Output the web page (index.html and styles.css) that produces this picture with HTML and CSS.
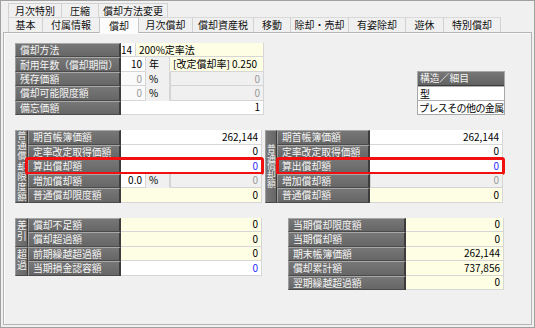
FILE: index.html
```html
<!DOCTYPE html>
<html lang="ja">
<head>
<meta charset="utf-8">
<link rel="stylesheet" href="styles.css">
</head>
<body>
<div class="win">
  <div class="tabs">
    <div class="tabrow r1">
      <span class="tab w54">月次特別</span>
      <span class="tab w38">圧縮</span>
      <span class="tab w70">償却方法変更</span>
    </div>
    <div class="tabrow r2">
      <span class="tab w35">基本</span>
      <span class="tab w58">付属情報</span>
      <span class="tab w40 sel">償却</span>
      <span class="tab w55">月次償却</span>
      <span class="tab w62">償却資産税</span>
      <span class="tab w38">移動</span>
      <span class="tab w59">除却・売却</span>
      <span class="tab w58">有姿除却</span>
      <span class="tab w39">遊休</span>
      <span class="tab w58">特別償却</span>
    </div>
  </div>
  <div class="panel">
    <div class="top">
      <div class="t1">
        <div class="row"><div class="lab">償却方法</div><div class="c wh w15 num">14</div><div class="c yl w127 txt">200%定率法</div></div>
        <div class="row"><div class="lab">耐用年数（償却期間）</div><div class="c wh w25 num">10</div><div class="c pl w24 txt">年</div><div class="c yl w93 txt">[改定償却率]&nbsp;0.250</div></div>
        <div class="row"><div class="lab">残存価額</div><div class="c lt w25 num gr">0</div><div class="c pl w24 txt">%</div><div class="c dis w93 num gr">0</div></div>
        <div class="row"><div class="lab">償却可能限度額</div><div class="c lt w25 num gr">0</div><div class="c pl w24 txt">%</div><div class="c dis w93 num gr">0</div></div>
        <div class="row"><div class="lab">備忘価額</div><div class="c wh w142 num">1</div></div>
      </div>
      <div class="struct">
        <div class="shead">構造／細目</div>
        <div class="sval">型</div>
        <div class="sval tight">プレスその他の金属</div>
      </div>
    </div>

    <div class="sec2">
      <div class="grp gl">
        <div class="vert v7"><span>普通償却限度額</span></div>
        <div class="rows">
          <div class="row"><div class="lab l92">期首帳簿価額</div><div class="c wh w141 num">262,144</div></div>
          <div class="row"><div class="lab l92">定率改定取得価額</div><div class="c wh w141 num">0</div></div>
          <div class="row hl hl-l"><div class="lab l92">算出償却額</div><div class="c wh w141 num bl">0</div></div>
          <div class="row"><div class="lab l92">増加償却額</div><div class="c wh w25 num">0.0</div><div class="c pl w24 txt">%</div><div class="c dis w92 num gr">0</div></div>
          <div class="row"><div class="lab l92">普通償却限度額</div><div class="c yl w141 num">0</div></div>
        </div>
      </div>
      <div class="grp gr2">
        <div class="vert v5"><span>普通償却額</span></div>
        <div class="rows">
          <div class="row"><div class="lab l93">期首帳簿価額</div><div class="c wh w133 num">262,144</div></div>
          <div class="row"><div class="lab l93">定率改定取得価額</div><div class="c wh w133 num">0</div></div>
          <div class="row hl hl-r"><div class="lab l93">算出償却額</div><div class="c wh w133 num bl">0</div></div>
          <div class="row"><div class="lab l93">増加償却額</div><div class="c dis w133 num gr">0</div></div>
          <div class="row"><div class="lab l93">普通償却額</div><div class="c yl w133 num">0</div></div>
        </div>
      </div>
    </div>

    <div class="sec3">
      <div class="gl3">
        <div class="grp sub">
          <div class="vert v2"><span>差引</span></div>
          <div class="rows">
            <div class="row"><div class="lab l92">償却不足額</div><div class="c yl w141 num">0</div></div>
            <div class="row"><div class="lab l92">償却超過額</div><div class="c yl w141 num">0</div></div>
          </div>
        </div>
        <div class="grp sub">
          <div class="vert v2"><span>超過</span></div>
          <div class="rows">
            <div class="row"><div class="lab l92">前期繰越超過額</div><div class="c yl w141 num">0</div></div>
            <div class="row"><div class="lab l92">当期損金認容額</div><div class="c wh w141 num bl">0</div></div>
          </div>
        </div>
      </div>
      <div class="gr3">
        <div class="row"><div class="lab l118">当期償却限度額</div><div class="c yl w98 num">0</div></div>
        <div class="row"><div class="lab l118">当期償却額</div><div class="c yl w98 num">0</div></div>
        <div class="row"><div class="lab l118">期末帳簿価額</div><div class="c yl w98 num">262,144</div></div>
        <div class="row"><div class="lab l118">償却累計額</div><div class="c yl w98 num">737,856</div></div>
        <div class="row"><div class="lab l118">翌期繰越超過額</div><div class="c yl w98 num">0</div></div>
      </div>
    </div>
  </div>
</div>
</body>
</html>
```

FILE: styles.css
```css
* { box-sizing: border-box; margin: 0; padding: 0; }
html, body { width: 535px; height: 328px; overflow: hidden; }
body {
  background: #f0f0f0;
  font-family: "Noto Sans CJK JP", "Noto Sans", sans-serif;
  font-size: 10px;
  color: #000;
}
.win {
  width: 535px;
  height: 328px;
  border: 1px solid #a0a0a0;
  padding: 2px 2px 2px 2px;
  display: flex;
  flex-direction: column;
  background: #f0f0f0;
}
.tabs { padding-left: 5px; position: relative; z-index: 2; }
.tabrow { display: flex; }
.r1 { height: 14px; }
.r2 { height: 15px; }
.tab {
  display: flex;
  align-items: center;
  justify-content: center;
  height: 100%;
  border: 1px solid #d2d2d2;
  border-bottom: none;
  margin-right: -1px;
  background: #f0f0f0;
  line-height: 12px;
  font-size: 10px;
  color: #111;
}
.r2 .tab { border-top-color: #d9d9d9; }
.tab.sel {
  background: #fcfcfc;
  height: 16px;
  border-color: #c8c8c8;
  position: relative;
}
.w35 { width: 35px; } .w38 { width: 38px; } .w39 { width: 39px; }
.w40 { width: 40px; } .w54 { width: 54px; } .w55 { width: 55px; }
.w58 { width: 58px; } .w59 { width: 59px; } .w62 { width: 62px; }
.w70 { width: 70px; }

.panel {
  flex: 1;
  border: 1px solid #b4b4b4;
  box-shadow: inset 1px 1px 0 #fbfbfb;
  background: #f0f0f0;
  padding: 10px 0 0 11px;
  position: relative;
  z-index: 1;
}

.top { display: flex; align-items: flex-end; height: 72px; }
.t1 { width: 249px; display: flex; flex-direction: column; }
.row { display: flex; height: 14.5px; position: relative; }
.t1 .row { height: 14.4px; }

.lab {
  width: 106px;
  flex: none;
  background: linear-gradient(#777, #666);
  color: #f6f6f6;
  font-size: 9.8px;
  line-height: 12px;
  padding-left: 4px;
  display: flex;
  align-items: center;
  white-space: nowrap;
  overflow: hidden;
  border-top: 1px solid #a8a8a8;
  border-left: 1px solid #9c9c9c;
  border-right: 2px solid #3c3c3c;
  border-bottom: 1px solid #4a4a4a;
}
.l92 { width: 93px; }
.l93 { width: 93px; }
.l118 { width: 118px; }

.c {
  flex: none;
  display: flex;
  align-items: center;
  border-bottom: 1px solid #d6d6d6;
  border-right: 1px solid #d6d6d6;
  font-size: 10px;
  line-height: 12px;
  white-space: nowrap;
  overflow: hidden;
}
.num { justify-content: flex-end; padding-right: 3px; }
.txt { justify-content: flex-start; padding-left: 3px; }
.wh { background: #ffffff; }
.lt { background: #fafafa; }
.yl { background: #fefee4; }
.pl { background: #f0f0f0; border-bottom-color: #f0f0f0; }
.dis { background: #f0f0f0; border: 1px solid #d4d4d4; border-top: none; }
.gr { color: #9a9a9a; }
.bl { color: #2a2aff; }
.c.w15 { width: 15px; } .c.w24 { width: 24px; } .c.w25 { width: 25px; }
.c.w92 { width: 92px; } .c.w93 { width: 94px; } .c.w98 { width: 98px; }
.c.w127 { width: 128px; } .c.w133 { width: 133px; } .c.w141 { width: 141px; }
.c.w142 { width: 143px; }

.struct {
  width: 88px;
  margin-left: 153px;
  border: 1px solid #a8a8a8;
  background: #fff;
}
.shead {
  height: 14px;
  background: linear-gradient(#777, #626262);
  color: #f4f4f4;
  font-size: 9.8px;
  line-height: 13px;
  padding-left: 2px;
  border-bottom: 1px solid #3c3c3c;
}
.sval {
  height: 14px;
  font-size: 10px;
  line-height: 13px;
  padding-left: 2px;
  white-space: nowrap;
  overflow: hidden;
  border-top: 1px solid #b0b0b0;
}
.sval.tight { letter-spacing: -0.6px; padding-left: 1px; }

.sec2 { display: flex; margin-top: 15px; }
.grp { display: flex; }
.gl { width: 248px; }
.gr2 { width: 239px; margin-left: 2px; }
.rows { display: flex; flex-direction: column; }
.vert {
  flex: none;
  width: 13px;
  background: linear-gradient(90deg, #777, #666);
  color: #f4f4f4;
  border-top: 1px solid #a8a8a8;
  border-left: 1px solid #9c9c9c;
  border-right: 1px solid #3c3c3c;
  border-bottom: 1px solid #4a4a4a;
  display: flex;
  align-items: center;
  justify-content: center;
  overflow: hidden;
}
.vert span {
  display: block;
  writing-mode: vertical-rl;
  text-orientation: upright;
  white-space: nowrap;
  line-height: 11px;
}
.v7 span { font-size: 9.4px; letter-spacing: 0.7px; }
.v5 { width: 12px; }
.v5 span { font-size: 8.8px; letter-spacing: 0; line-height: 10px; }
.v2 span { font-size: 9.8px; letter-spacing: 2px; }

.hl::after {
  content: "";
  position: absolute;
  top: -2px;
  bottom: -1px;
  border: 3px solid #f01010;
  border-radius: 3px;
  pointer-events: none;
}
.hl-l::after { left: -3px; right: -2px; }
.hl-r::after { left: -1px; right: -2px; }

.sec3 { display: flex; margin-top: 15px; align-items: flex-start; }
.gl3 { width: 248px; display: flex; flex-direction: column; }
.gr3 { margin-left: 25px; display: flex; flex-direction: column; width: 216px; }
```
